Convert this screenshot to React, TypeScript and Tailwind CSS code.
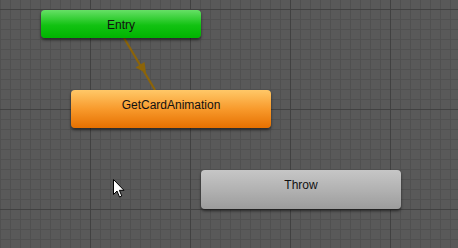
import type { ReactNode } from "react";

// animator state graph, nodes live on a free canvas
type NodeProps = {
  label: string;
  className: string;
  children?: ReactNode;
};

function StateNode({ label, className }: NodeProps) {
  return (
    <div
      className={`absolute rounded-[4px] shadow-[0_2px_3px_rgba(0,0,0,0.55)] flex justify-center pt-[7px] text-[12px] leading-[16px] text-[#111111] font-['Liberation_Sans',Arial,sans-serif] ${className}`}
    >
      {label}
    </div>
  );
}

function Grid() {
  return (
    <svg className="absolute inset-0" width="458" height="248">
      <defs>
        <pattern id="minor" width="10" height="10" patternUnits="userSpaceOnUse" x="0" y="9">
          <path d="M0 0.5 H10 M0.5 0 V10" stroke="#505050" strokeWidth="1" fill="none" />
        </pattern>
        <pattern id="major" width="100" height="100" patternUnits="userSpaceOnUse" x="90" y="9">
          <path d="M0 0.5 H100 M0.5 0 V100" stroke="#414141" strokeWidth="1" fill="none" />
        </pattern>
      </defs>
      <rect width="458" height="248" fill="#595959" />
      <rect width="458" height="248" fill="url(#minor)" />
      <rect width="458" height="248" fill="url(#major)" />
    </svg>
  );
}

function Transition() {
  return (
    <svg className="absolute inset-0" width="458" height="248">
      <line x1="124" y1="38" x2="155" y2="90" stroke="#8c6408" strokeWidth="2.2" />
      <polygon points="146,73 135.5,67.5 144.5,62" fill="#8c6408" />
    </svg>
  );
}

function Cursor() {
  return (
    <svg className="absolute left-[113px] top-[179px]" width="14" height="20" viewBox="0 0 14 20">
      <path
        d="M0.5 0.5 V15.5 L4 12 L6.5 18 L8.8 17 L6.4 11.3 H11 Z"
        fill="#ffffff"
        stroke="#000000"
        strokeWidth="1"
        strokeLinejoin="miter"
      />
    </svg>
  );
}

export default function App() {
  return (
    <div className="relative w-[458px] h-[248px] overflow-hidden bg-[#595959]">
      <Grid />
      <Transition />
      <StateNode
        label="Entry"
        className="left-[41px] top-[10px] w-[160px] h-[28px] pt-[6px] bg-[linear-gradient(to_bottom,#66e066,#12c212_55%,#00b400)]"
      />
      <StateNode
        label="GetCardAnimation"
        className="left-[71px] top-[90px] w-[200px] h-[38px] bg-[linear-gradient(to_bottom,#ffc868,#f89a2c_50%,#e67000)]"
      />
      <StateNode
        label="Throw"
        className="left-[201px] top-[170px] w-[200px] h-[39px] bg-[linear-gradient(to_bottom,#c6c6c6,#b2b2b2_50%,#9c9c9c)]"
      />
      <Cursor />
    </div>
  );
}
